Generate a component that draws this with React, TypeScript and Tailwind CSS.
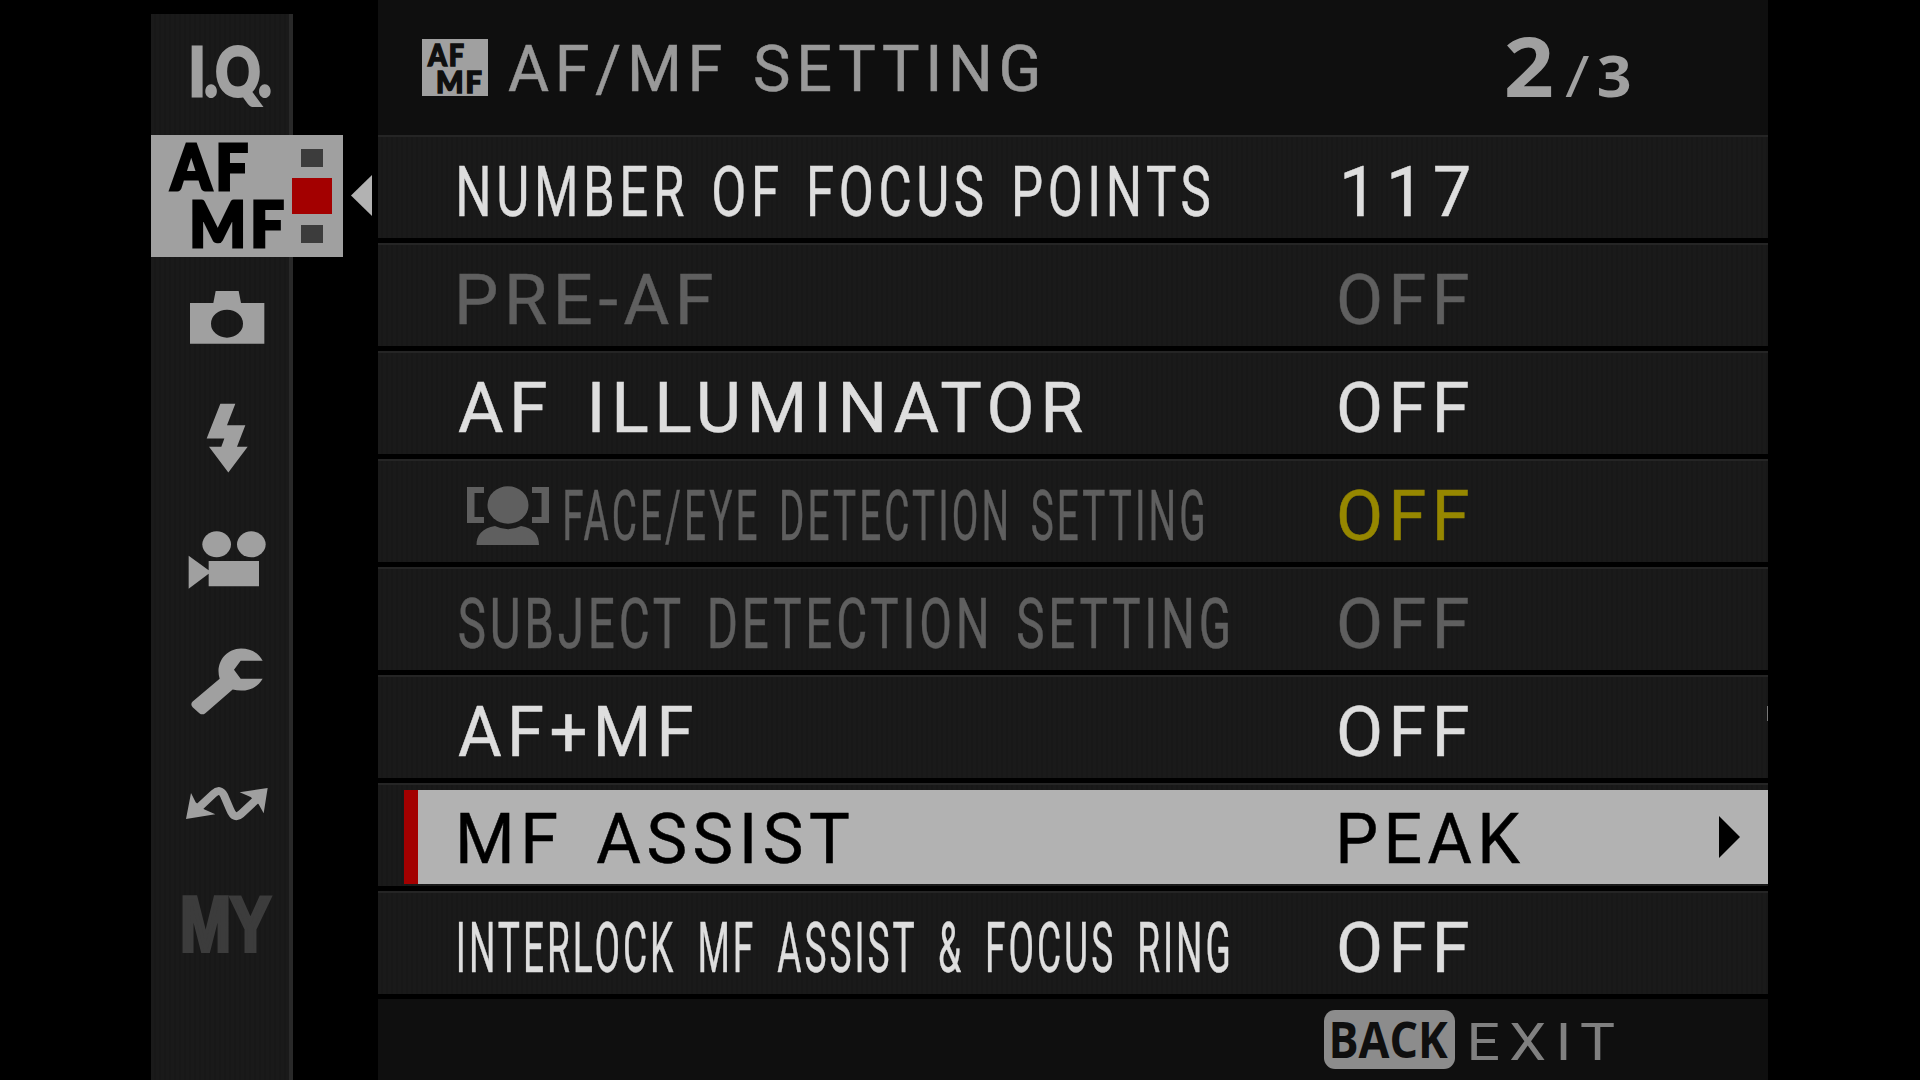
import { useLayoutEffect, useRef, type ReactNode } from 'react';

type Tone = 'normal' | 'dim' | 'active';

type MenuRow = {
  label: string;
  labelClass: string;
  value: string;
  valueClass: string;
  tone: Tone;
  face?: boolean;
};

const rows: MenuRow[] = [
  { label: 'NUMBER OF FOCUS POINTS', labelClass: 'w-[750px] tracking-[0.09em] [word-spacing:0.1em]', value: '117', valueClass: 'ml-[6px] w-[125px] tracking-[0.12em]', tone: 'normal' },
  { label: 'PRE-AF', labelClass: 'w-[253px]', value: 'OFF', valueClass: 'ml-[2px] w-[128px] text-[#5f5f5f]', tone: 'dim' },
  { label: 'AF ILLUMINATOR', labelClass: '-ml-[1px] w-[624px]', value: 'OFF', valueClass: 'ml-[2px] w-[128px]', tone: 'normal' },
  { label: 'FACE/EYE DETECTION SETTING', labelClass: 'w-[638px]', value: 'OFF', valueClass: 'ml-[2px] w-[128px] text-[#968700]', tone: 'dim', face: true },
  { label: 'SUBJECT DETECTION SETTING', labelClass: 'w-[770px]', value: 'OFF', valueClass: 'ml-[2px] w-[128px] text-[#5f5f5f]', tone: 'dim' },
  { label: 'AF+MF', labelClass: '-ml-[1px] w-[234px]', value: 'OFF', valueClass: 'ml-[2px] w-[128px]', tone: 'normal' },
  { label: 'MF ASSIST', labelClass: 'w-[389px]', value: 'PEAK', valueClass: 'ml-[1px] w-[180px]', tone: 'active' },
  { label: 'INTERLOCK MF ASSIST & FOCUS RING', labelClass: 'w-[770px] [word-spacing:0.24em]', value: 'OFF', valueClass: 'ml-[2px] w-[128px]', tone: 'normal' },
];

const toneClass: Record<Tone, string> = {
  normal: 'text-[#dedede]',
  dim: 'text-[#5f5f5f]',
  active: 'text-black',
};

// Squeezes or stretches one line of text so its ink fills the box width.
function FitText({ children, className = '' }: { children: string; className?: string }) {
  const boxRef = useRef<HTMLSpanElement>(null);
  const textRef = useRef<HTMLSpanElement>(null);

  useLayoutEffect(() => {
    const box = boxRef.current;
    const text = textRef.current;
    const ctx = document.createElement('canvas').getContext('2d');
    if (!box || !text || !ctx) return;
    const style = getComputedStyle(text);
    ctx.font = `${style.fontWeight} ${style.fontSize} ${style.fontFamily}`;
    ctx.letterSpacing = style.letterSpacing === 'normal' ? '0px' : style.letterSpacing;
    ctx.wordSpacing = style.wordSpacing;
    const m = ctx.measureText(children);
    const ink = m.actualBoundingBoxLeft + m.actualBoundingBoxRight;
    text.style.transform = `scaleX(${box.clientWidth / ink}) translateX(${m.actualBoundingBoxLeft}px)`;
  }, [children]);

  return (
    <span ref={boxRef} className={`inline-block shrink-0 whitespace-nowrap ${className}`}>
      <span ref={textRef} className="inline-block origin-left">
        {children}
      </span>
    </span>
  );
}

function FaceIcon() {
  return (
    <svg className="ml-[8px] mr-[16px] h-[59px] w-[82px] shrink-0" viewBox="0 0 82 59" fill="currentColor">
      <path d="M0 1H17V7H7.500V31H17V37H0ZM82 1H65V7H74.500V31H65V37H82Z" />
      <ellipse cx="41" cy="19" rx="20.5" ry="18.7" />
      <path d="M9.500 59C9.500 49 15 42.500 28 40Q41 46.500 54 40C67 42.500 72 49 72 59Z" />
    </svg>
  );
}

function Slot({ children }: { children: ReactNode }) {
  return <li className="flex h-[121.5px] w-[142px] items-center">{children}</li>;
}

function Tabs() {
  return (
    <ul className="flex flex-col text-[#a0a0a0]">
      <li className="flex h-[120.5px] items-center pl-[41.5px]">
        <FitText className="mt-[-6px] w-[77px] font-[Lato] text-[66px] font-black tracking-[-0.02em] [-webkit-text-stroke:3px_currentColor]">
          I.Q.
        </FitText>
      </li>
      <li className="flex h-[122.5px] w-[221px] shrink-0 items-center">
        <div className="flex h-full w-[192px] shrink-0 items-center bg-[#a0a0a0] text-black">
          <div className="-mt-[3px] flex w-[141px] flex-col gap-[0.5px] font-[Lato] text-[62px] leading-[56px] font-black tracking-[0.07em] [-webkit-text-stroke:3px_currentColor]">
            <FitText className="ml-[18.5px] h-[56px] w-[76.5px]">AF</FitText>
            <FitText className="ml-[41.500px] h-[56px] w-[90px]">MF</FitText>
          </div>
          <div className="flex w-10 flex-col items-center gap-[11px]">
            <span className="h-[18px] w-[22px] bg-[#3c3c3c]" />
            <span className="h-[36px] w-10 bg-[#a30000]" />
            <span className="h-[18px] w-[22px] bg-[#3c3c3c]" />
          </div>
        </div>
        <svg className="ml-2 h-[41px] w-[21px] shrink-0" viewBox="0 0 21 41" fill="#b2b2b2">
          <path d="M21 0V41L0 20.500Z" />
        </svg>
      </li>
      <Slot>
        <svg className="h-full w-full" viewBox="33 -39 426 364.5" fill="currentColor">
          <path fillRule="evenodd" d="M150 99H220L227 63H296L303 99H373V221H150ZM213 161A48 42 0 1 0 309 161A48 42 0 1 0 213 161Z" />
        </svg>
      </Slot>
      <Slot>
        <svg className="h-full w-full" viewBox="33 325.5 426 364.5" fill="currentColor">
          <path d="M241 400H286L261 464H316L291 529H323L265 606L207 529H244L253 504H200Z" />
        </svg>
      </Slot>
      <Slot>
        <svg className="h-full w-full" viewBox="33 690 426 364.5" fill="currentColor">
          <ellipse cx="230" cy="823" rx="43" ry="39" />
          <ellipse cx="334" cy="823" rx="43" ry="39" />
          <path d="M146 857L206 901V873H357V949H206V911L146 956Z" />
        </svg>
      </Slot>
      <Slot>
        <svg className="h-full w-full" viewBox="33 34.5 426 364.5" fill="currentColor">
          <path d="M368 151H302L282 178L302 205H368C352 234 316 247 278 237L196 308Q187 315 178 308L158 290Q150 281 158 273L239 205C225 160 255 115 303 114C335 114 358 130 368 151Z" />
        </svg>
      </Slot>
      <Slot>
        <svg className="h-full w-full" viewBox="33 399 426 364.5" fill="currentColor">
          <path d="M175 594L221 551Q240 533 252 556L270 598Q283 630 303 612L350 568" fill="none" stroke="currentColor" strokeWidth="24" />
          <path d="M138 627L153 549L167 577L192 598L226 613Z" />
          <path d="M383 534L299 547L332 561L356 583L371 610Z" />
        </svg>
      </Slot>
      <Slot>
        <FitText className="-mt-[3px] ml-[32.5px] w-[86px] font-['Liberation_Sans'] text-[78px] font-bold tracking-[-0.02em] text-[#3c3c3c] [-webkit-text-stroke:4px_currentColor]">
          MY
        </FitText>
      </Slot>
    </ul>
  );
}

function Row({ row }: { row: MenuRow }) {
  const active = row.tone === 'active';
  return (
    <li className="h-[108px] border-b-[5px] border-black bg-[repeating-linear-gradient(90deg,#1a1a1a_0_3px,#181818_3px_5px)]">
      <div className={`flex h-full border-t-2 border-[#252525] text-[70px] tracking-[0.08em] [word-spacing:0.15em] [-webkit-text-stroke:0.5px_currentColor] ${toneClass[row.tone]}`}>
        <div
          className={
            active
              ? 'mt-[5px] ml-[26px] flex h-[94px] flex-1 items-center border-l-[14px] border-[#a30000] bg-[#b2b2b2] pl-[42px]'
              : 'flex flex-1 items-center pt-[8px] pl-[81px]'
          }
        >
          <div className={`flex w-[879px] shrink-0 items-center ${active ? 'pt-[4px]' : ''}`}>
            {row.face && <FaceIcon />}
            <FitText className={row.labelClass}>{row.label}</FitText>
          </div>
          <FitText className={`${row.valueClass} ${active ? 'mt-[4px]' : ''}`}>{row.value}</FitText>
          {active && (
            <svg className="mr-[28px] ml-auto h-[42px] w-[21px]" viewBox="0 0 21 42" fill="currentColor">
              <path d="M0 0V42L21 21Z" />
            </svg>
          )}
          {row.label === 'AF+MF' && <span className="mt-[-37px] ml-auto h-[15px] w-px bg-[#777777]" />}
        </div>
      </div>
    </li>
  );
}

export default function App() {
  return (
    <div className="flex h-[1080px] w-[1920px] overflow-hidden bg-black pl-[151px] font-[Roboto] leading-none">
      {/* Tab rail */}
      <nav className="mt-[14px] mr-[85px] w-[142px] shrink-0 border-r-4 border-[#292929] bg-[repeating-linear-gradient(90deg,#1a1a1a_0_3px,#181818_3px_5px)]">
        <Tabs />
      </nav>

      <main className="flex w-[1390px] shrink-0 flex-col bg-[#0f0f0f]">
        {/* Title bar */}
        <header className="flex h-[135px] shrink-0 items-center pl-[44px] text-[#999999]">
          <div className="flex h-[57px] w-[66px] flex-col gap-px bg-[#a0a0a0] pt-[2px] font-[Lato] text-[30px] leading-[26px] font-black tracking-[0.07em] text-[#0f0f0f] [-webkit-text-stroke:1.5px_currentColor]">
            <FitText className="ml-[5px] h-[26px] w-[37px]">AF</FitText>
            <FitText className="ml-[16px] h-[26px] w-[44px]">MF</FitText>
          </div>
          <FitText className="mt-[5px] ml-[20px] w-[529px] text-[64px] tracking-[0.09em] [word-spacing:0.06em] [-webkit-text-stroke:0.5px_currentColor]">
            AF/MF SETTING
          </FitText>
          <div className="-mt-[6px] ml-[470px] flex items-baseline font-['Open_Sans'] font-bold text-[#a0a0a0]">
            <FitText className="w-[45px] text-[82px]">2</FitText>
            <FitText className="ml-[13px] w-[24px] text-[56px] font-normal">/</FitText>
            <FitText className="ml-[10px] w-[31px] text-[57px]">3</FitText>
          </div>
        </header>

        <ul className="shrink-0">
          {rows.map((row) => (
            <Row key={row.label} row={row} />
          ))}
        </ul>

        {/* Key hints */}
        <footer className="flex h-[81px] items-center pl-[946px] text-[#808080]">
          <span className="flex h-[59px] w-[131px] items-center rounded-[11px] bg-[#8c8c8c] pl-[8px] font-['Open_Sans'] text-[51px] font-bold text-[#0f0f0f]">
            <FitText className="-mt-[3px] w-[116px]">BACK</FitText>
          </span>
          <FitText className="mt-[6px] ml-[16px] w-[143px] text-[52px] tracking-[0.16em]">EXIT</FitText>
        </footer>
      </main>
    </div>
  );
}
